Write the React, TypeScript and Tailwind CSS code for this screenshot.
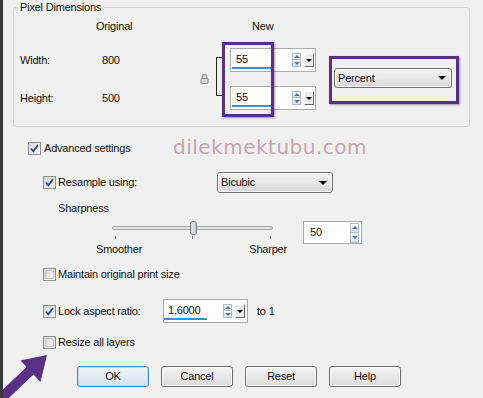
import React from "react";

function Check({ checked }: { checked?: boolean }) {
  return (
    <div className="w-[13px] h-[13px] shrink-0 border border-[#8e8f8f] bg-gradient-to-br from-[#d2d2d2] to-[#fbfbfb] flex items-center justify-center">
      {checked ? (
        <svg width="11" height="11" viewBox="0 0 11 11">
          <path d="M2 5.5 L4.3 8.3 L9 2.2" stroke="#2c4a8a" strokeWidth="1.9" fill="none" />
        </svg>
      ) : (
        <div className="w-[9px] h-[9px] bg-gradient-to-br from-[#dadada] to-[#f6f6f6] border border-[#c8c8c8]" />
      )}
    </div>
  );
}

function SpinArrows({ tall }: { tall?: boolean }) {
  const h = tall ? "h-[10px]" : "h-[7px]";
  return (
    <div className="flex flex-col w-[9px]">
      <div className={`${h} w-[9px] border border-[#b3bac5] bg-gradient-to-b from-[#ffffff] to-[#d5e0ee] flex items-center justify-center`}>
        <div className="w-0 h-0 border-x-[3px] border-x-transparent border-b-[3px] border-b-[#54749e]" />
      </div>
      <div className={`${h} w-[9px] border border-t-0 border-[#b3bac5] bg-gradient-to-b from-[#ffffff] to-[#d5e0ee] flex items-center justify-center`}>
        <div className="w-0 h-0 border-x-[3px] border-x-transparent border-t-[3px] border-t-[#54749e]" />
      </div>
    </div>
  );
}

function DropBtn() {
  return (
    <div className="w-[10px] h-[14px] bg-[#ececec] border border-t-white border-l-white border-r-[#696969] border-b-[#696969] flex items-center justify-center">
      <div className="w-0 h-0 border-x-[3px] border-x-transparent border-t-[3px] border-t-black" />
    </div>
  );
}

function Combo({ label, cls }: { label: string; cls: string }) {
  return (
    <div className={`${cls} rounded-[3px] border border-[#707070] bg-gradient-to-b from-[#f3f3f3] via-[#e8e8e8] to-[#d6d6d6] flex items-center justify-between pl-[3px] pr-[5px] shadow-[inset_0_0_0_1px_#fafafa]`}>
      <span className="text-[11px] leading-[13px]">{label}</span>
      <div className="w-0 h-0 border-x-[4px] border-x-transparent border-t-[4px] border-t-black" />
    </div>
  );
}

function Btn({ label, primary }: { label: string; primary?: boolean }) {
  return (
    <div
      className={
        primary
          ? "w-[72px] h-[21px] rounded-[3px] border border-[#4a8bb8] bg-gradient-to-b from-[#eef5f9] to-[#d4e3ec] shadow-[inset_0_0_0_1px_#b8dcf0] flex items-center justify-center text-[11px]"
          : "w-[72px] h-[21px] rounded-[3px] border border-[#707070] bg-gradient-to-b from-[#f4f4f4] to-[#dcdcdc] shadow-[inset_0_0_0_1px_#fbfbfb] flex items-center justify-center text-[11px]"
      }
    >
      {label}
    </div>
  );
}

function ValueBox({ value }: { value: string }) {
  return (
    <div className="w-[86px] h-[24px] bg-white border border-[#acacac] flex items-stretch">
      <div className="flex-1 flex flex-col justify-end pb-[2px] pl-[1px]">
        <span className="pl-[4px] text-[11px] leading-[13px]">{value}</span>
        <div className="mt-[1px] h-[2px] w-[40px] bg-[#3f8fd2]" />
      </div>
      <div className="flex items-center gap-[3px] pr-[1px]">
        <SpinArrows />
        <DropBtn />
      </div>
    </div>
  );
}

function Lock() {
  return (
    <svg width="9" height="10" viewBox="0 0 9 10">
      <path d="M2.2 4.5 V3 A2.3 2.3 0 0 1 6.8 3 V4.5" stroke="#8a8a8a" strokeWidth="1.2" fill="none" />
      <rect x="1" y="4.5" width="7" height="5" rx="0.8" fill="#d8d8d8" stroke="#8a8a8a" strokeWidth="1" />
    </svg>
  );
}

export default function App() {
  return (
    <div className="relative w-[483px] h-[398px] overflow-hidden bg-[#f0f0f0] border-l-[3px] border-[#3a3a3a] text-[#111] font-['Liberation_Sans',Arial,sans-serif] text-[11px] tracking-[-0.2px]">
      {/* Pixel Dimensions group */}
      <fieldset className="ml-[10px] w-[457px] h-[127px] border border-[#d3d3d3] rounded-[3px]">
        <legend className="ml-[4px] px-[2px] text-[11px] leading-[14px]">Pixel Dimensions</legend>
        <div className="flex">
          <div className="ml-[6px] w-[76px] flex flex-col pt-[5px]">
            <div className="h-[14px]" />
            <div className="mt-[15px] h-[24px] flex items-center">Width:</div>
            <div className="mt-[14px] h-[24px] flex items-center">Height:</div>
          </div>
          <div className="w-[104px] flex flex-col pt-[5px]">
            <div className="h-[14px] flex items-center">Original</div>
            <div className="mt-[15px] h-[24px] flex items-center pl-[6px]">800</div>
            <div className="mt-[14px] h-[24px] flex items-center pl-[6px]">500</div>
          </div>
          <div className="w-[10px] pt-[60px]">
            <Lock />
          </div>
          <div className="ml-[6px] w-[8px] pt-[43px]">
            <div className="h-[39px] w-[8px] border-l border-y border-[#222]" />
          </div>
          <div className="ml-[6px] w-[86px] flex flex-col pt-[5px]">
            <div className="h-[14px] flex items-center pl-[22px]">New</div>
            <div className="mt-[15px]">
              <ValueBox value="55" />
            </div>
            <div className="mt-[14px]">
              <ValueBox value="55" />
            </div>
          </div>
          <div className="ml-[18px] pt-[54px]">
            <Combo label="Percent" cls="w-[118px] h-[20px]" />
          </div>
        </div>
      </fieldset>

      {/* Advanced settings */}
      <div className="mt-[11px] h-[20px] flex items-center ml-[25px]">
        <div className="w-[145px] flex items-center gap-[3px]">
          <Check checked />
          <span>Advanced settings</span>
        </div>
        <span className="font-['DejaVu_Sans',sans-serif] text-[20px] leading-[20px] tracking-[0.5px] text-[#c6a6ae] -mt-[3px]">
          dilekmektubu.com
        </span>
      </div>

      {/* Resample */}
      <div className="mt-[14px] h-[21px] flex items-center ml-[40px]">
        <div className="w-[174px] flex items-center gap-[2px]">
          <Check checked />
          <span>Resample using:</span>
        </div>
        <Combo label="Bicubic" cls="w-[116px] h-[21px]" />
      </div>

      {/* Sharpness */}
      <div className="mt-[8px] h-[14px] flex items-center ml-[55px]">Sharpness</div>

      {/* Slider */}
      <div className="mt-[5px] h-[36px] flex ml-[93px]">
        <div className="w-[191px] flex flex-col">
          <div className="relative ml-[16px] mt-[6px] w-[161px] h-[4px] rounded-full border border-[#a8a8a8] bg-[#e2e2e2]">
            <div className="absolute left-[77px] -top-[6px] w-[7px] h-[14px] rounded-[3px] border border-[#7a8088] bg-gradient-to-r from-[#eef0f4] to-[#c4c9d2]" />
          </div>
          <div className="relative mt-[6px] h-[3px]">
            <div className="absolute left-[19px] top-0 w-px h-[3px] bg-[#777]" />
            <div className="absolute left-[96px] top-0 w-px h-[3px] bg-[#777]" />
            <div className="absolute left-[174px] top-0 w-px h-[3px] bg-[#777]" />
          </div>
          <div className="mt-[3px] h-[14px] flex items-center justify-between">
            <span>Smoother</span>
            <span>Sharper</span>
          </div>
        </div>
        <div className="ml-[16px] mt-[1px] w-[59px] h-[23px] bg-white border border-[#acacac] flex items-center justify-between pl-[6px] pr-[2px]">
          <span>50</span>
          <SpinArrows tall />
        </div>
      </div>

      {/* Maintain */}
      <div className="mt-[11px] h-[14px] flex items-center gap-[2px] ml-[40px]">
        <Check />
        <span>Maintain original print size</span>
      </div>

      {/* Lock aspect */}
      <div className="mt-[18px] h-[24px] flex items-center ml-[40px]">
        <div className="w-[120px] flex items-center gap-[2px]">
          <Check checked />
          <span>Lock aspect ratio:</span>
        </div>
        <div className="w-[85px] h-[24px] bg-white border border-[#acacac] flex items-stretch">
          <div className="flex-1 flex flex-col justify-end pb-[2px] pl-[0px]">
            <span className="pl-[4px] text-[11px] leading-[13px]">1,6000</span>
            <div className="mt-[1px] h-[2px] w-[43px] bg-[#3f8fd2]" />
          </div>
          <div className="flex items-center gap-[3px] pr-[2px]">
            <SpinArrows />
            <DropBtn />
          </div>
        </div>
        <span className="ml-[9px]">to 1</span>
      </div>

      {/* Resize all layers */}
      <div className="mt-[12px] h-[14px] flex items-center gap-[2px] ml-[40px]">
        <Check />
        <span>Resize all layers</span>
      </div>

      {/* Buttons */}
      <div className="mt-[17px] flex gap-[12px] ml-[74px]">
        <Btn label="OK" primary />
        <Btn label="Cancel" />
        <Btn label="Reset" />
        <Btn label="Help" />
      </div>

      {/* Highlight boxes (overlay) */}
      <div className="absolute left-[219px] top-[42px] w-[52px] h-[75px] border-[3px] border-[#5a2f86] shadow-[1px_1px_2px_rgba(0,0,0,0.35)] pointer-events-none" />
      <div className="absolute left-[326px] top-[56px] w-[130px] h-[48px] border-[3px] border-[#5a2f86] shadow-[1px_1px_2px_rgba(0,0,0,0.35)] pointer-events-none" />

      {/* Arrow overlay */}
      <svg className="absolute -left-[3px] top-0 pointer-events-none" width="483" height="398" viewBox="0 0 483 398">
        <polygon
          points="47,355 40.5,382 33.5,374.5 1.5,405 -5.5,397.5 26.5,367 20.5,360.5"
          fill="#5a2f86"
        />
      </svg>
    </div>
  );
}
